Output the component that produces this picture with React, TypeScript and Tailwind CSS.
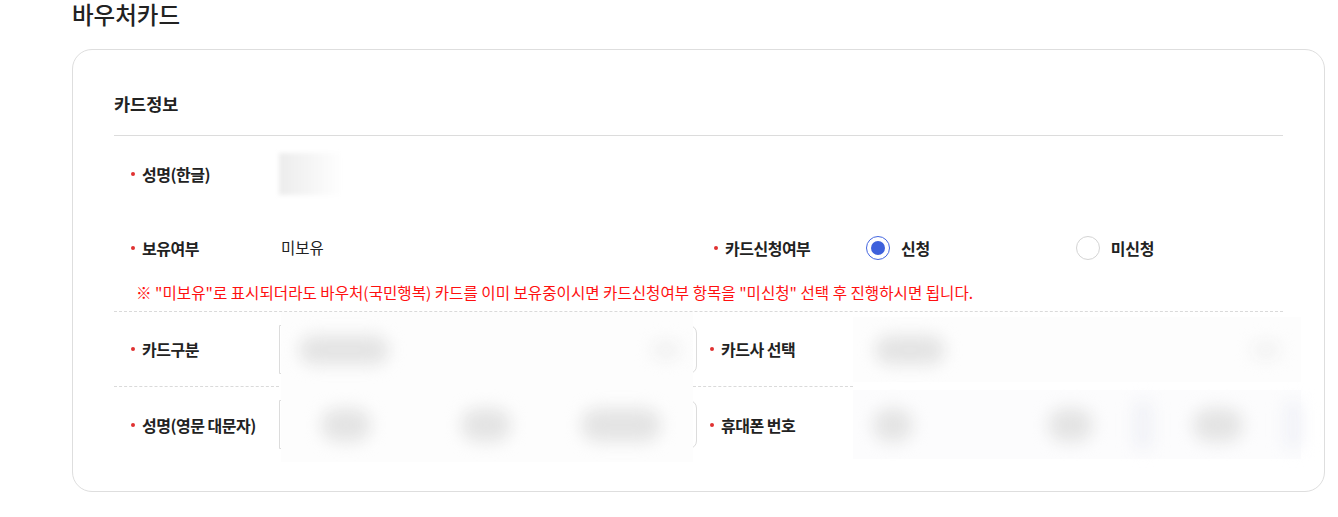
import React from 'react'

const font = { fontFamily: '"Noto Sans CJK KR", "Noto Sans", sans-serif' }

const Label = ({ text }: { text: string }) => (
  <div className="flex items-center gap-[7px] pl-[17px] text-[16px] font-bold tracking-[-0.5px] text-[#222]">
    <span className="h-[4px] w-[4px] rounded-full bg-[#e03131]" />
    <span>{text}</span>
  </div>
)

const Blob = ({ left, width, height = 22, tone = 'bg-[#e4e4e4]' }: { left: number; width: number; height?: number; tone?: string }) => (
  <div
    className={`absolute top-1/2 -translate-y-1/2 rounded-full blur-[8px] ${tone}`}
    style={{ left, width, height }}
  />
)

const Radio = ({ checked, label }: { checked?: boolean; label: string }) => (
  <label className="flex items-center gap-[11px] text-[16px] font-bold tracking-[-0.3px] text-[#222]">
    {checked ? (
      <span className="flex h-[24px] w-[24px] items-center justify-center rounded-full border-[1.5px] border-[#4466e0] bg-white">
        <span className="h-[14px] w-[14px] rounded-full bg-[#3e61dc]" />
      </span>
    ) : (
      <span className="h-[24px] w-[24px] rounded-full border border-[#d4d4d4] bg-white" />
    )}
    <span>{label}</span>
  </label>
)

const BlurredInput = ({ children }: { children: React.ReactNode }) => (
  <div className="relative h-full">
    <div className="absolute inset-y-[13px] left-0 right-[-4px] rounded-r-[8px] border border-[#dcdcdc]" />
    <div className="absolute inset-y-0 left-[2px] right-0 overflow-hidden bg-[#fdfdfd]">{children}</div>
  </div>
)

export default function App() {
  return (
    <div className="min-h-[517px] bg-white pl-[72px] pr-[13px]" style={font}>
      <h2 className="h-[29px] pt-[1px] text-[23.5px] font-medium leading-[26px] text-[#222]">바우처카드</h2>

      <div className="mt-[20px] rounded-[20px] border border-[#dedede] px-[41px] pb-[29px] pt-[42px]">
        <h3 className="text-[17.5px] font-bold leading-[24px] text-[#222]">카드정보</h3>
        <div className="mt-[19px] border-t border-[#dcdcdc]" />

        {/* 성명(한글) */}
        <div className="grid h-[75px] grid-cols-[165px_1fr] items-center">
          <Label text="성명(한글)" />
          <div className="h-[42px] w-[64px] bg-gradient-to-r from-[#ececec] to-white blur-[2px]" />
        </div>

        {/* 보유여부 / 카드신청여부 */}
        <div className="grid h-[74px] grid-cols-[165px_418px_156px_1fr] items-center">
          <Label text="보유여부" />
          <span className="pl-[2px] text-[15.5px] text-[#222]">미보유</span>
          <Label text="카드신청여부" />
          <div className="flex items-center pl-[13px]">
            <Radio checked label="신청" />
            <div className="ml-[146px]">
              <Radio label="미신청" />
            </div>
          </div>
        </div>
        <p className="mt-[-3px] pl-[22px] text-[15.6px] leading-[20px] text-[#ff1010]">
          ※ "미보유"로 표시되더라도 바우처(국민행복) 카드를 이미 보유중이시면 카드신청여부 항목을 "미신청" 선택 후 진행하시면 됩니다.
        </p>
        <div className="mt-[9px] border-t border-dashed border-[#dadada]" />

        {/* 카드구분 / 카드사 선택 */}
        <div className="grid h-[75px] grid-cols-[165px_414px_160px_1fr]">
          <div className="flex items-center border-b border-dashed border-[#dadada]">
            <Label text="카드구분" />
          </div>
          <BlurredInput>
            <Blob left={18} width={90} height={30} />
            <Blob left={370} width={30} height={20} tone="bg-[#f2f2f2]" />
          </BlurredInput>
          <div className="flex items-center border-b border-dashed border-[#dadada]">
            <Label text="카드사 선택" />
          </div>
          <div className="relative mr-[-18px] my-[5px] bg-[#fdfdfd]">
            <Blob left={22} width={70} height={30} />
            <Blob left={398} width={30} height={20} tone="bg-[#f3f3f3]" />
          </div>
        </div>

        {/* 성명(영문 대문자) / 휴대폰 번호 */}
        <div className="grid h-[75px] grid-cols-[165px_414px_160px_1fr]">
          <div className="flex items-center">
            <Label text="성명(영문 대문자)" />
          </div>
          <BlurredInput>
            <Blob left={40} width={50} height={34} />
            <Blob left={180} width={50} height={34} />
            <Blob left={300} width={80} height={34} />
          </BlurredInput>
          <div className="flex items-center">
            <Label text="휴대폰 번호" />
          </div>
          <div className="relative mr-[-18px] my-[3px] bg-[#fcfcfd]">
            <Blob left={20} width={40} height={34} />
            <Blob left={195} width={45} height={34} />
            <Blob left={280} width={20} height={50} tone="bg-[#f1f2f7]" />
            <Blob left={340} width={50} height={34} />
            <Blob left={430} width={20} height={50} tone="bg-[#f2f3f8]" />
          </div>
        </div>
      </div>
    </div>
  )
}
